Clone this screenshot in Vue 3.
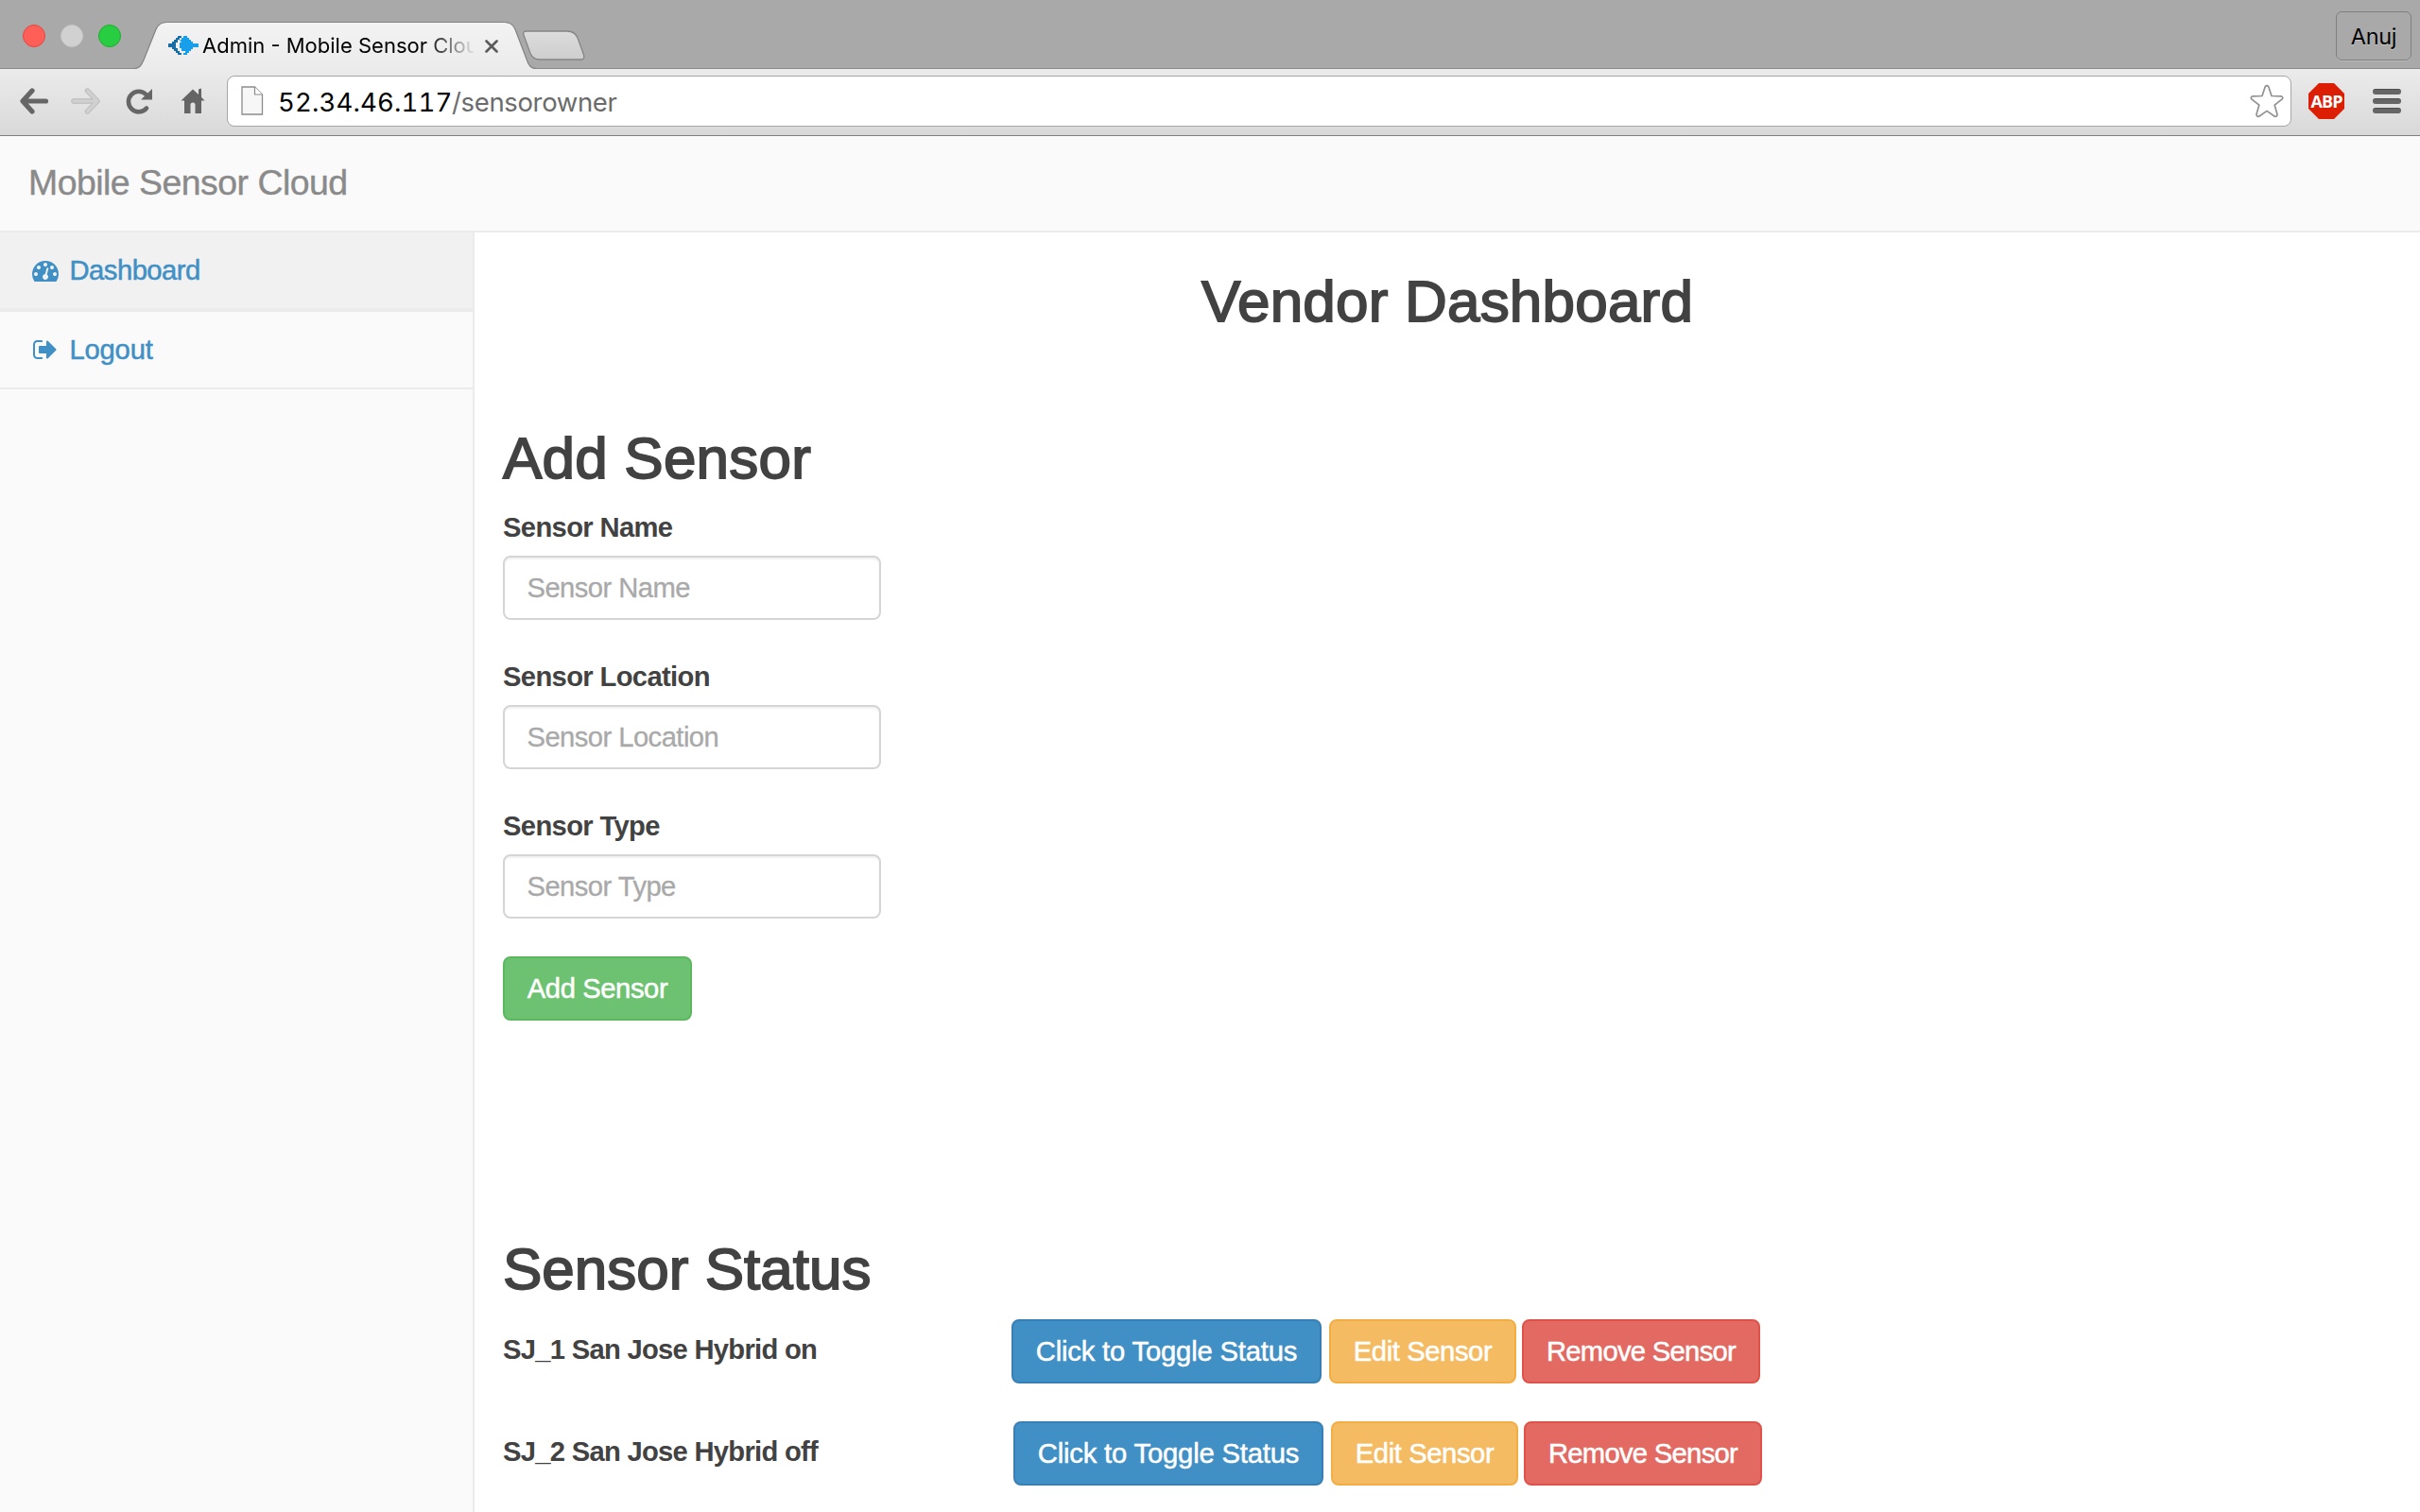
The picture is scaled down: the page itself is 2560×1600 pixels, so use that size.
<script setup>
const fields = ['Sensor Name', 'Sensor Location', 'Sensor Type']
const sensors = [
  { id: 1, label: 'SJ_1 San Jose Hybrid on', cls: 'first' },
  { id: 2, label: 'SJ_2 San Jose Hybrid off', cls: 'second' }
]
</script>

<template>
  <div class="window">
    <header class="strip">
      <div class="lights"><i class="red"></i><i class="grey"></i><i class="green"></i></div>
      <div class="tab">
        <svg class="tab-shape" width="486" height="73" viewBox="0 0 486 73">
          <defs>
            <linearGradient id="tabfill" x1="0" y1="0" x2="0" y2="1">
              <stop offset="0" stop-color="#f3f3f3" /><stop offset="1" stop-color="#ebebeb" />
            </linearGradient>
            <linearGradient id="newfill" x1="0" y1="0" x2="0" y2="1">
              <stop offset="0" stop-color="#dcdcdc" /><stop offset="1" stop-color="#cecece" />
            </linearGradient>
          </defs>
          <path d="M-2 73C4 73 6 69 8 64L21 31.500C23 27 26 24 32 24H390C396 24 399 27 401 32L413 63C415 69 417 73 424 73Z" fill="url(#tabfill)" />
          <path d="M-2 72.500C4 72.500 6 68 8 63.500L21 31C23 26.500 26 23.500 32 23.500H390C396 23.500 399 26.500 401 31L413 62.500C415 68.500 417 72.500 424 72.500" fill="none" stroke="#858585" stroke-width="1.200" />
          <path d="M413 33H456C462 33 465 35 467 40L473.500 58C474.500 61.500 473.500 63 470.500 63H427C422 63 419 61 417 56.500L410 37C409 34.500 410 33 413 33Z" fill="url(#newfill)" stroke="#858585" stroke-width="1.300" />
        </svg>
        <svg class="favicon" width="32" height="20" viewBox="0 0 32 20">
          <path d="M0 8h4V6h2V4h2V2h2V0h4v2h-2v2h-2v3H8v6h2v3h2v2h2v2h-4v-2H8v-2H6v-2H4v-2H0z" fill="#176da4" />
          <path d="M12 4h2V2h2V0h4v2h2v2h2v2h2v2h6v4h-6v2h-2v2h-2v2h-2v2h-4v-2h2v-2h-4v-3h-2V7h2z" fill="#199fe9" />
        </svg>
        <span class="tab-title">Admin - Mobile Sensor Cloud</span>
        <svg class="close" width="14" height="14" viewBox="0 0 14 14"><path d="M1.500 1.500L12.500 12.500M12.500 1.500L1.500 12.500" stroke="#5b5b5b" stroke-width="2.600" stroke-linecap="round" /></svg>
      </div>
      <div class="profile">Anuj</div>
    </header>

    <div class="toolbar">
      <svg class="nav-icon" width="32" height="28" viewBox="0 0 32 28"><path d="M14 3L4 14L14 25M4.500 14H28.500" fill="none" stroke="#666" stroke-width="5.200" stroke-linecap="round" stroke-linejoin="round" /></svg>
      <svg class="nav-icon fwd" width="32" height="28" viewBox="0 0 32 28"><path d="M17.500 3L28 14L17.500 25M27.500 14H3" fill="none" stroke="#b9b9b9" stroke-width="5.400" stroke-linecap="round" stroke-linejoin="round" /><path d="M17.500 3L28 14L17.500 25M27.500 14H3" fill="none" stroke="#d0d0d0" stroke-width="3.600" stroke-linecap="round" stroke-linejoin="round" /></svg>
      <svg class="nav-icon reload" width="28" height="28" viewBox="0 0 28 28"><path d="M21.500 7A10.800 10.800 0 1 0 22 21.500" fill="none" stroke="#666" stroke-width="4.600" stroke-linecap="round" /><path d="M28 1V12.500H16Z" fill="#666" /></svg>
      <svg class="nav-icon home" width="26" height="28" viewBox="0 0 26 28"><path d="M13 1.500L19 7V1.500L22 .500V9.800L25.500 13.500H22V27H15.500V18Q15.500 15.500 13 15.500Q10.500 15.500 10.500 18V27H4V13.500H.500Z" fill="#646464" /></svg>
      <div class="omnibox">
        <svg width="24" height="32" viewBox="0 0 24 32"><path d="M1 1H14.500L22.500 9V30H1Z" fill="#f7f7f7" stroke="#8c8c8c" stroke-width="1.300" /><path d="M14.500 1V9H22.500" fill="#fff" stroke="#8c8c8c" stroke-width="1.200" /></svg>
        <span class="url"><span class="host">52.34.46.117</span><span class="path">/sensorowner</span></span>
        <svg class="star" width="36" height="36" viewBox="0 0 36 36"><path d="M16.300 2.600Q18 .500 19.700 2.600L23 12.500L33 12.800Q35.800 13.600 34.200 15.800L26.200 22.200L29 32Q29 34.800 26.300 34.200L18 28.400L9.700 34.200Q7 34.800 7 32L9.800 22.200L1.800 15.800Q.200 13.600 3 12.800L13 12.500Z" fill="#fff" stroke="#919191" stroke-width="1.700" stroke-linejoin="round" /></svg>
      </div>
      <div class="abp">ABP</div>
      <div class="menu"><i></i><i></i><i></i></div>
    </div>

    <nav class="navbar"><span class="brand">Mobile Sensor Cloud</span></nav>

    <div class="page">
      <aside class="sidebar">
        <a class="link active">
          <svg width="28" height="28" viewBox="0 0 1792 1792"><path d="M384 1152q0-53-37.500-90.500t-90.500-37.500-90.500 37.500-37.500 90.500 37.500 90.500 90.500 37.500 90.500-37.500 37.500-90.500zm192-448q0-53-37.500-90.500t-90.500-37.500-90.500 37.500-37.500 90.500 37.500 90.500 90.500 37.500 90.500-37.500 37.500-90.500zm428 481l101-382q6-26-7.500-48.500t-38.500-29.500-48 6.500-30 39.500l-101 382q-60 5-107 43.500t-63 98.500q-20 77 20 146t117 89 146-20 89-117q16-60-6-117t-72-91zm660-33q0-53-37.500-90.500t-90.500-37.500-90.500 37.500-37.500 90.500 37.500 90.500 90.500 37.500 90.500-37.500 37.500-90.500zm-640-640q0-53-37.500-90.500t-90.500-37.500-90.500 37.500-37.500 90.500 37.500 90.500 90.500 37.500 90.500-37.500 37.500-90.500zm448 192q0-53-37.500-90.500t-90.500-37.500-90.500 37.500-37.500 90.500 37.500 90.500 90.500 37.500 90.500-37.500 37.500-90.500zm320 448q0 261-141 483-19 29-54 29h-1402q-35 0-54-29-141-221-141-483 0-182 71-348t191-286 286-191 348-71 348 71 286 191 191 286 71 348z" fill="#408fc5" /></svg>
          <span>Dashboard</span>
        </a>
        <a class="link logout">
          <svg width="28" height="28" viewBox="0 0 1792 1792"><path d="M704 1440q0 4 1 20t.5 26.500-3 23.500-10 19.500-20.500 6.500h-320q-119 0-203.500-84.500t-84.500-203.500v-704q0-119 84.500-203.500t203.500-84.500h320q13 0 22.500 9.500t9.500 22.500q0 4 1 20t.5 26.500-3 23.500-10 19.500-20.500 6.500h-320q-66 0-113 47t-47 113v704q0 66 47 113t113 47h312l11.500 1 11.500 3 8 5.500 7 9 2 13.500zm928-544q0 26-19 45l-544 544q-19 19-45 19t-45-19-19-45v-288h-448q-26 0-45-19t-19-45v-384q0-26 19-45t45-19h448v-288q0-26 19-45t45-19 45 19l544 544q19 19 19 45z" fill="#408fc5" /></svg>
          <span>Logout</span>
        </a>
      </aside>

      <main class="content">
        <h1 class="title">Vendor Dashboard</h1>
        <h1 class="add-heading">Add Sensor</h1>
        <form class="form">
          <div v-for="f in fields" :key="f" class="group">
            <label>{{ f }}</label>
            <input type="text" :placeholder="f" />
          </div>
          <button type="button" class="btn success">Add Sensor</button>
        </form>
        <h1 class="status-heading">Sensor Status</h1>
        <div v-for="s in sensors" :key="s.id" class="row" :class="s.cls">
          <span class="row-label">{{ s.label }}</span>
          <button class="btn primary">Click to Toggle Status</button>
          <button class="btn warning">Edit Sensor</button>
          <button class="btn danger">Remove Sensor</button>
        </div>
      </main>
    </div>
  </div>
</template>

<style>
body { margin: 0; overflow: hidden; background: #fff; }
</style>

<style scoped>
* { box-sizing: border-box; }
.window { width: 2560px; height: 1600px; overflow: hidden; display: flex; flex-direction: column; background: #fff; color: #424242; font-family: "Liberation Sans", Arial, sans-serif; font-size: 29.200px; }
.strip { height: 73px; flex: none; display: flex; align-items: flex-start; background: #a9a9a9; border-bottom: 1px solid #8b8b8b; font-family: Inter, Roboto, sans-serif; color: #000; }
.lights { display: flex; gap: 16px; padding: 26px 0 0 24px; width: 144px; flex: none; }
.lights i { width: 24px; height: 24px; border-radius: 50%; border-width: 1px; border-style: solid; }
.red { background: #ff5f57; border-color: #e2463f; }
.grey { background: #d1d1d1; border-color: #c6c6c6; }
.green { background: #28cd41; border-color: #1fae30; }
.tab { position: relative; width: 486px; height: 73px; flex: none; display: flex; align-items: center; padding: 24px 0 0 34px; }
.tab-shape { position: absolute; left: 0; top: 0; overflow: visible; }
.favicon { position: relative; flex: none; margin-top: -1px; }
.tab-title { position: relative; width: 287px; margin: -2px 0 0 4px; overflow: hidden; white-space: nowrap; font-size: 22px; line-height: 32px; -webkit-mask-image: linear-gradient(90deg, #000 236px, transparent 290px); mask-image: linear-gradient(90deg, #000 236px, transparent 290px); }
.close { position: relative; margin-left: 12px; }
.profile { margin: 12px 9px 0 auto; width: 80px; height: 52px; border: 1.500px solid #808080; border-radius: 6px; background: #a9a9a9; display: flex; align-items: center; justify-content: center; font-size: 23.500px; letter-spacing: -.3px; text-shadow: 0 1px 0 #c9c9c9; box-shadow: 0 1px 0 #b9b9b9; }
.toolbar { height: 71px; flex: none; display: flex; align-items: center; padding: 0 19px 2px 20px; background: linear-gradient(#ebebeb, #d9d9d9); border-bottom: 1px solid #7f7f7f; }
.nav-icon { flex: none; }
.fwd { margin-left: 23px; }
.reload { margin-left: 26px; }
.home { margin-left: 30px; }
.omnibox { margin-left: 23px; width: 2184px; height: 54px; flex: none; border: 1.500px solid #a6a6a6; border-radius: 8px; background: #fff; display: flex; align-items: center; padding: 0 7px 0 14px; font-family: Inter, Roboto, sans-serif; font-size: 27.500px; }
.url { margin: 1px 0 0 15px; display: flex; white-space: nowrap; font-variant-numeric: tabular-nums; }
.host { color: #000; width: 184px; letter-spacing: .15px; }
.path { color: #6b6b6b; letter-spacing: -.35px; }
.star { margin-left: auto; }
.abp { margin-left: 18px; width: 38px; height: 38px; flex: none; background: #dc1e05; clip-path: polygon(29% 0, 71% 0, 100% 29%, 100% 71%, 71% 100%, 29% 100%, 0 71%, 0 29%); color: #fff; font: bold 18px/39px "Open Sans", sans-serif; text-align: center; letter-spacing: -.9px; }
.menu { margin-left: 30px; display: flex; flex-direction: column; gap: 4px; }
.menu i { width: 30px; height: 6px; border-radius: 3px; background: #666; border-top: 1px solid #4e4e4e; }
.navbar { height: 102px; flex: none; background: #fafafa; border-bottom: 2px solid #ebebeb; padding: 0 30px; display: flex; align-items: center; }
.brand { font-size: 37.400px; letter-spacing: -.5px; color: #8a8a8a; margin-top: -1px; -webkit-text-stroke: .4px #8a8a8a; }
.page { flex: 1; display: flex; min-height: 0; }
.sidebar { width: 502px; flex: none; background: #fafafa; border-right: 2px solid #ebebeb; }
.link { display: flex; align-items: center; height: 82px; padding-left: 34px; border-bottom: 2px solid #ebebeb; color: #408fc5; letter-spacing: -.5px; -webkit-text-stroke: .5px #408fc5; }
.link.active { height: 84px; background: #f1f1f1; border-bottom-width: 4px; }
.link.logout { letter-spacing: -.2px; }
.link span { margin-left: 11.500px; line-height: 40px; }
.content { flex: 1; padding: 0 30px; display: flex; flex-direction: column; }
h1 { margin: 0; font-size: 62px; line-height: 66px; font-weight: 400; letter-spacing: .2px; -webkit-text-stroke: 1.800px #424242; }
.title { margin-top: 40px; text-align: center; }
.add-heading { margin-top: 100px; }
.form { margin-top: 20px; display: flex; flex-direction: column; align-items: flex-start; }
.group { display: flex; flex-direction: column; margin-bottom: 40px; }
label, .row-label { font-weight: bold; line-height: 40px; letter-spacing: -.65px; }
input { margin-top: 10px; width: 400px; height: 68px; border: 2px solid #d5d5d5; border-radius: 8px; padding: 0 23.500px; font: inherit; letter-spacing: -.55px; background: #fff; box-shadow: inset 0 2px 2px rgba(0, 0, 0, .06); }
input::placeholder { color: #a9a9a9; opacity: 1; -webkit-text-stroke: .3px #a9a9a9; }
.btn { height: 68px; padding: 0; border: 2px solid; border-radius: 8px; color: #fff; font: inherit; letter-spacing: -.4px; white-space: nowrap; -webkit-text-stroke: .5px #fff; }
.success { width: 200px; background: #6dc271; border-color: #5cb85f; }
.primary { width: 328px; background: #408fc5; border-color: #387fb5; letter-spacing: -.17px; }
.warning { width: 198px; margin-left: 8px; background: #f4bb62; border-color: #f3ae43; }
.danger { width: 252px; margin-left: 6px; background: #e26a62; border-color: #e05249; letter-spacing: -.7px; }
.status-heading { margin-top: 230px; letter-spacing: 0; }
.row { display: flex; align-items: center; height: 68px; margin-top: 20px; }
.row + .row { margin-top: 40px; }
.row-label { width: 538px; margin-top: -5px; letter-spacing: -.72px; }
.second .row-label { width: 540px; }
</style>
